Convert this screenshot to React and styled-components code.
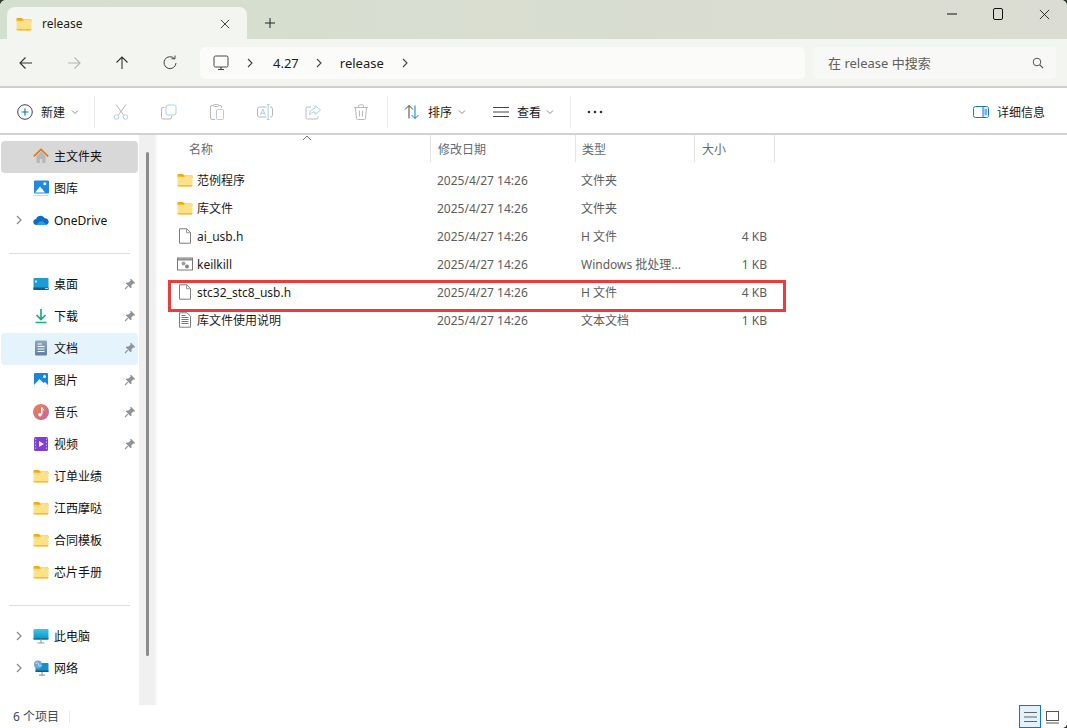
import React from 'react';
import styled, { createGlobalStyle } from 'styled-components';

const Global = createGlobalStyle`
  html, body { margin: 0; padding: 0; background: #2f3a2a; }
  body { font-family: "Noto Sans", "Noto Sans CJK SC", sans-serif; font-size: 12px; color: #1a1a1a; }
  * { box-sizing: border-box; }
`;

const Window = styled.div`
  width: 1067px; height: 728px; display: flex; flex-direction: column; overflow: hidden; background: #fff;
  border-radius: 6px 6px 5px 0;
`;
const TitleBar = styled.div`
  height: 39px; flex: none; display: flex; align-items: flex-end; padding-left: 7px;
  background: linear-gradient(90deg, #d5dfd0, #d9ddd1 60%, #dbdcd3);
`;
const Tab = styled.div`
  width: 240px; height: 32px; background: #f3f5f0; border-radius: 8px 8px 0 0;
  display: flex; align-items: center; padding: 1px 17px 0 9px; color: #1c1c1c;
`;
const TabLabel = styled.span`
  flex: 1; margin-left: 10px; font-size: 12px; line-height: 16px;
`;
const NewTab = styled.div`
  width: 46px; height: 32px; display: flex; align-items: center; justify-content: center;
`;
const WinControls = styled.div`
  margin-left: auto; height: 39px; display: flex; align-self: flex-start;
`;
const WinBtn = styled.div`
  width: 46px; height: 28px; display: flex; align-items: center; justify-content: center;
`;
const NavBar = styled.div`
  height: 49px; flex: none; background: #f3f5f0; border-bottom: 2px solid #cfd1c9;
  display: flex; align-items: center; padding: 0 11px 0 2px;
`;
const NavBtn = styled.div`
  width: 48px; height: 32px; display: flex; align-items: center; justify-content: center;
`;
const Address = styled.div`
  width: 605px; height: 32px; margin-left: 6px; background: #fbfcfa; border-radius: 5px;
  display: flex; align-items: center; padding-left: 13px;
`;
const Crumb = styled.span`
  display: flex; align-items: center; font-size: 13px; margin: 0 ${p => p.$after}px 0 ${p => p.$before}px; color: #1c1c1c;
`;
const Search = styled.div`
  width: 243px; height: 32px; margin-left: 8px; background: #f8f9f6; border-radius: 5px;
  display: flex; align-items: center; justify-content: space-between; padding: 0 12px 0 15px; color: #5f5f5f; font-size: 13px;
`;
const CmdBar = styled.div`
  height: 47px; flex: none; background: #fff; border-bottom: 2px solid #d3d3cd;
  display: flex; align-items: center; padding-top: 2px;
`;
const CmdGroup = styled.div`
  width: ${p => p.$w}px; height: 32px; display: flex; align-items: center; padding-left: ${p => p.$pl || 0}px; flex: none;
`;
const CmdIcon = styled.div`
  width: 48px; height: 32px; display: flex; align-items: center; justify-content: center; flex: none;
`;
const CmdSep = styled.div`
  width: 1px; height: 32px; background: #e9e9e9; flex: none;
`;
const CmdLabel = styled.span`
  margin-left: 8px; font-size: 12px; color: #1a1a1a;
`;
const Caret = styled.span`
  margin-left: ${p => p.$ml || 6}px; display: flex;
`;
const Details = styled.div`
  margin-left: auto; padding-right: 22px; display: flex; align-items: center;
`;
const Body = styled.div`
  flex: 1; min-height: 0; display: flex;
`;
const Side = styled.nav`
  width: 139px; flex: none; padding: 6px 1px 0 1px;
`;
const SideItem = styled.div`
  height: 32px; border-radius: 4px; display: flex; align-items: center; padding-bottom: 2px;
  background: ${p => p.$bg || 'transparent'}; color: #111; font-size: 12px;
`;
const Chevron = styled.span`
  width: 32px; flex: none; display: flex; justify-content: center; padding-left: 3px;
`;
const SideIcon = styled.span`
  width: 16px; height: 16px; flex: none; display: flex;
`;
const SideText = styled.span`
  margin-left: 5px; flex: 1;
`;
const Pin = styled.span`
  width: 14px; flex: none; display: flex;
`;
const SideSep = styled.div`
  height: 32px; display: flex; align-items: center; padding: 0 8px;
  &::after { content: ""; display: block; width: 121px; height: 1px; background: #dcdcdc; }
`;
const Track = styled.div`
  width: 18px; flex: none; background: #f0f0f0; padding: 17px 0 0 7px; border-right: 2px solid #f6f6f6;
`;
const Thumb = styled.div`
  width: 3px; height: 504px; background: #8b8b8b; border-radius: 2px;
`;
const Main = styled.main`
  flex: 1; min-width: 0; position: relative;
`;
const HeaderRow = styled.div`
  display: grid; grid-template-columns: 274px 145px 119px 80px; height: 27px; position: relative; color: #5f6b78;
`;
const HeadCell = styled.div`
  padding-left: ${p => p.$pl}px; display: flex; align-items: center; border-right: 1px solid #e5e5e5; font-size: 12px;
`;
const SortCaret = styled.span`
  position: absolute; left: 145px; top: 0; display: flex;
`;
const Rows = styled.div`
  padding-top: 4px; position: relative;
`;
const Row = styled.div`
  display: grid; grid-template-columns: 273px 145px 119px 80px; height: 28px; align-items: center; color: #5d5d5d; font-size: 12px;
`;
const NameCell = styled.div`
  display: flex; align-items: center; padding-left: 20px; color: #1c1c1c;
`;
const RowIcon = styled.span`
  width: 16px; height: 16px; display: flex; flex: none;
`;
const RowName = styled.span`
  margin-left: 4px;
`;
const Cell = styled.div`
  padding-left: ${p => p.$pl}px;
`;
const SizeCell = styled.div`
  text-align: right; padding-right: 7px;
`;
const RedBox = styled.div`
  position: absolute; left: 11px; top: 118px; width: 618px; height: 32px; border: 3px solid #ef3a3a; pointer-events: none;
`;
const Status = styled.footer`
  height: 23px; flex: none; display: flex; align-items: center; padding-left: 13px; color: #3a4a5c; font-size: 12px; background: #fff;
`;
const StatusText = styled.span`
  padding-bottom: 2px;
`;
const StatusSep = styled.div`
  width: 1px; height: 12px; background: #e8e8e8; margin-left: 10px;
`;
const ViewBtns = styled.div`
  margin-left: auto; display: flex; align-items: center; padding-right: 4px;
`;
const ViewBtn = styled.div`
  width: 22px; height: 23px; display: flex; align-items: center; justify-content: center;
  ${p => p.$on ? 'background:#e3f2fa;border:1px solid #0a78d0;' : ''}
`;

const Folder = () => (
  <svg width="16" height="16" viewBox="0 0 16 16">
    <path d="M0.500 3.200c0-.7.5-1.200 1.200-1.200h3.600c.4 0 .7.100 1 .4l1 1H14.300c.7 0 1.200.5 1.200 1.200v1H.5z" fill="#f0ac0c" />
    <path d="M.5 4.800h6.600L8.500 4h5.800c.7 0 1.200.5 1.200 1.200v8c0 .7-.5 1.200-1.200 1.200H1.700c-.7 0-1.200-.5-1.200-1.200z" fill="#fde08a" />
    <path d="M.5 13.200h15v.1c0 .7-.5 1.200-1.200 1.200H1.700c-.7 0-1.200-.5-1.200-1.200z" fill="#f2b51f" />
  </svg>
);
const FileIcon = () => (
  <svg width="16" height="16" viewBox="0 0 16 16">
    <path d="M2.500.8h7.200l3.800 3.800v10.600h-11z" fill="#fff" stroke="#7d7d7d" />
    <path d="M9.500 1v3.700h3.800" fill="none" stroke="#9a9a9a" />
  </svg>
);
const BatIcon = () => (
  <svg width="16" height="16" viewBox="0 0 16 16">
    <rect x=".5" y="2" width="15" height="12" fill="#fff" stroke="#7a7a7a" />
    <rect x="1" y="2.500" width="14" height="2" fill="#8d8d8d" />
    <circle cx="6.500" cy="7.500" r="2" fill="#9aa0a6" />
    <circle cx="10" cy="10.500" r="2" fill="#7f868c" />
  </svg>
);
const TxtIcon = () => (
  <svg width="16" height="16" viewBox="0 0 16 16">
    <path d="M2.500.8h7.500l3.500 3.500v10.900h-11z" fill="#fff" stroke="#7d7d7d" />
    <path d="M4.500 5.500h7M4.500 7.500h7M4.500 9.500h7M4.500 11.500h7M4.500 3.500h4" stroke="#777" />
  </svg>
);
const Home = () => (
  <svg width="16" height="16" viewBox="0 0 16 16">
    <path d="M3.500 8v7h3.400v-4h2.200v4h3.400V8L8 3.500z" fill="#b7b7b7" />
    <path d="M.8 8.400 8 1.400l7.200 7" fill="none" stroke="#e2761a" strokeWidth="1.700" />
  </svg>
);
const Gallery = () => (
  <svg width="16" height="16" viewBox="0 0 16 16">
    <rect x="1" y="0.500" width="15" height="13" rx="1" fill="#1f88e0" />
    <circle cx="11.800" cy="3.800" r="1.500" fill="#fff" />
    <path d="M2 12.500 7 6.500l5 6z" fill="#fff" />
    <path d="M0 9v6h15v.8H1.400C.6 15.800 0 15.200 0 14.400z" fill="#a7cdea" />
  </svg>
);
const Cloud = () => (
  <svg width="16" height="16" viewBox="0 0 16 16">
    <path d="M3.600 13C1.700 13 .3 11.700.3 10c0-1.600 1.200-2.900 2.800-3C3.800 5 5.600 3.800 7.600 3.800c1.800 0 3.300 1 4 2.500 2.200-.2 4.100 1.500 4.100 3.500 0 1.800-1.500 3.200-3.400 3.200z" fill="#0f6cc4" />
    <path d="M3.600 13C5 10 7.500 8.500 10 9.500l3.500 3.500z" fill="#2b9ae8" />
  </svg>
);
const Desktop = () => (
  <svg width="16" height="16" viewBox="0 0 16 16">
    <rect x=".5" y="2" width="15" height="12" rx="1" fill="#1d9cd3" />
    <rect x=".5" y="11.500" width="15" height="2.500" fill="#0b5f96" />
    <rect x="2" y="4.500" width="2" height="2" fill="#c8edf9" />
    <rect x="12" y="12" width="3" height="1" fill="#9fd7ef" />
  </svg>
);
const Download = () => (
  <svg width="16" height="16" viewBox="0 0 16 16">
    <path d="M8 1v10M3.500 7 8 11.500 12.500 7" fill="none" stroke="#18a57c" strokeWidth="1.600" />
    <path d="M2.500 14.500h11" stroke="#20b58a" strokeWidth="1.600" />
  </svg>
);
const Doc = () => (
  <svg width="16" height="16" viewBox="0 0 16 16">
    <defs><linearGradient id="dg" x1="0" y1="0" x2="0" y2="1"><stop offset="0" stopColor="#8ea6c3" /><stop offset="1" stopColor="#647f9f" /></linearGradient></defs>
    <rect x="2" y="0.500" width="12" height="15" rx="1" fill="url(#dg)" />
    <path d="M4.500 4h4.500M4.500 6.500h7M4.500 9h7M4.500 11.500h7" stroke="#fff" />
  </svg>
);
const Pic = () => (
  <svg width="16" height="16" viewBox="0 0 16 16">
    <rect x="1" y="1" width="14" height="14" rx="1" fill="#1787dc" />
    <circle cx="11.500" cy="4.500" r="1.500" fill="#fff" />
    <path d="M1 13 6.500 7l4 4 1.500-1 3 3v1a1 1 0 0 1-1 1H2a1 1 0 0 1-1-1z" fill="#fff" />
  </svg>
);
const Music = () => (
  <svg width="16" height="16" viewBox="0 0 16 16">
    <defs><linearGradient id="mg" x1="0" y1="0" x2="1" y2="1"><stop offset="0" stopColor="#e8894a" /><stop offset="1" stopColor="#c660a8" /></linearGradient></defs>
    <circle cx="8" cy="8" r="8" fill="url(#mg)" />
    <path d="M8.800 3.500v6.800" stroke="#fff" strokeWidth="1.400" />
    <path d="M8.800 3.500c.5 1.500 2 1.500 2.200 3" stroke="#fff" fill="none" />
    <circle cx="7" cy="10.700" r="1.800" fill="#fff" />
  </svg>
);
const Video = () => (
  <svg width="16" height="16" viewBox="0 0 16 16">
    <rect x="1" y="1" width="14" height="14" rx="1.500" fill="#7c3fd0" />
    <path d="M6 5v6l5-3z" fill="#f2e9ff" />
    <path d="M2.500 2.500v11M13.500 2.500v11" stroke="#c9a8f2" strokeWidth="1.200" strokeDasharray="1.500 1.500" />
  </svg>
);
const PC = () => (
  <svg width="16" height="16" viewBox="0 0 16 16">
    <defs><linearGradient id="pg" x1="0" y1="0" x2="0" y2="1"><stop offset="0" stopColor="#3cc9e0" /><stop offset="1" stopColor="#0f8ec6" /></linearGradient></defs>
    <rect x=".5" y="1" width="15" height="10.500" rx="1" fill="url(#pg)" />
    <rect x=".5" y="10.500" width="15" height="1" fill="#0b5d86" />
    <path d="M8 11.500V15M4.500 15h7" stroke="#8aa0ad" strokeWidth="1.200" />
  </svg>
);
const Net = () => (
  <svg width="16" height="16" viewBox="0 0 16 16">
    <rect x="2.500" y="3" width="13" height="9" rx="1" fill="#1592c4" />
    <rect x="2.500" y="10.500" width="13" height="1.500" fill="#0b5d86" />
    <path d="M9 12v3M6 15.200h6" stroke="#8aa0ad" strokeWidth="1.200" />
    <circle cx="5" cy="4.500" r="4" fill="#6ea8d8" />
    <path d="M2.500 3.500c2-1 3-1 3 1s2 1 3 1" stroke="#d5e8f6" fill="none" />
  </svg>
);
const PinIcon = () => (
  <svg width="12" height="12" viewBox="0 0 12 12">
    <path d="M7 .8 11.200 5 10.200 5.800 9.300 5.400 7.400 7.600 7.600 9.600 6.600 10.200 1.800 5.400 2.600 4.400 4.500 4.600 6.600 2.700 6.200 1.600z" fill="#8e9499" />
    <path d="M3.800 8.200 1 11" stroke="#8e9499" strokeWidth="1.200" />
  </svg>
);
const ChevR = ({ c = '#8a8a8a', s = 1.300 }) => (
  <svg width="8" height="10" viewBox="0 0 8 10"><path d="M2 1l4 4-4 4" fill="none" stroke={c} strokeWidth={s} /></svg>
);
const ChevD = () => (
  <svg width="8" height="6" viewBox="0 0 8 6"><path d="M1 1.500 4 4.500 7 1.500" fill="none" stroke="#8a8a8a" strokeWidth="1" /></svg>
);
const Arrow = ({ d, c = '#333' }) => {
  const rot = { left: 0, right: 180, up: 90 }[d];
  return (
    <svg width="16" height="16" viewBox="0 0 16 16" style={{ transform: `rotate(${rot}deg)` }}>
      <path d="M14 8H2.200M7.500 2.500 2 8l5.500 5.500" fill="none" stroke={c} strokeWidth="1.100" />
    </svg>
  );
};
const Refresh = () => (
  <svg width="16" height="16" viewBox="0 0 16 16">
    <path d="M12.500 3.700A6 6 0 1 0 14 8" fill="none" stroke="#444" strokeWidth="1" />
    <path d="M9.500 3.800h3.500V.5" fill="none" stroke="#444" strokeWidth="1" />
  </svg>
);
const Monitor = () => (
  <svg width="16" height="16" viewBox="0 0 16 16">
    <rect x="1" y="1" width="14" height="11" rx="1.500" fill="none" stroke="#444" strokeWidth="1" />
    <path d="M8 12v2.500M5 14.500h6" stroke="#444" strokeWidth="1.200" />
  </svg>
);
const SearchIcon = () => (
  <svg width="12" height="12" viewBox="0 0 12 12">
    <circle cx="5" cy="5" r="3.800" fill="none" stroke="#555" strokeWidth="1" />
    <path d="M7.800 7.800 11 11" stroke="#555" strokeWidth="1.100" />
  </svg>
);
const B = '#a9cff0', G = '#b9b9b9';
const Plus = () => (
  <svg width="16" height="16" viewBox="0 0 16 16">
    <circle cx="8" cy="8" r="7.300" fill="none" stroke="#444" strokeWidth="1" />
    <path d="M8 4.500v7M4.500 8h7" stroke="#0a78d4" strokeWidth="1.200" />
  </svg>
);
const Cut = () => (
  <svg width="16" height="16" viewBox="0 0 16 16">
    <path d="M3 .5 10.500 11M13 .5 5.500 11" fill="none" stroke={G} />
    <circle cx="3.500" cy="13" r="2.300" fill="none" stroke={B} />
    <circle cx="12.500" cy="13" r="2.300" fill="none" stroke={B} />
  </svg>
);
const Copy = () => (
  <svg width="16" height="16" viewBox="0 0 16 16">
    <path d="M3.500 3.500H2A1.500 1.500 0 0 0 .5 5v8.500A1.500 1.500 0 0 0 2 15h7a1.500 1.500 0 0 0 1.500-1.500V12" fill="none" stroke={G} />
    <rect x="5" y="1" width="10" height="10" rx="2" fill="none" stroke={B} />
  </svg>
);
const Paste = () => (
  <svg width="16" height="16" viewBox="0 0 16 16">
    <path d="M6 15.500H3A1.500 1.500 0 0 1 1.500 14V3A1.500 1.500 0 0 1 3 1.500h8A1.500 1.500 0 0 1 12.500 3v1" fill="none" stroke={G} />
    <rect x="4.500" y=".5" width="5" height="2" rx=".8" fill="#fff" stroke={G} />
    <rect x="7.500" y="5.500" width="7" height="10" rx="1" fill="none" stroke={B} />
  </svg>
);
const Rename = () => (
  <svg width="16" height="16" viewBox="0 0 16 16">
    <path d="M9.500 3H2.500A2 2 0 0 0 .5 5v6a2 2 0 0 0 2 2h7M13 3h.5a2 2 0 0 1 2 2v6a2 2 0 0 1-2 2H13" fill="none" stroke={G} />
    <path d="M3.300 11 5.800 5l2.500 6M4.200 9.200h3.200" stroke={B} fill="none" />
    <path d="M11.200.8v14.400M9.800.5h2.800M9.800 15.500h2.800" stroke={B} fill="none" />
  </svg>
);
const Share = () => (
  <svg width="16" height="16" viewBox="0 0 16 16">
    <path d="M6 3H2.500A1.500 1.500 0 0 0 1 4.500v9A1.500 1.500 0 0 0 2.500 15h9a1.500 1.500 0 0 0 1.500-1.500V12" fill="none" stroke={G} />
    <path d="M10 1.500 15.500 6 10 10.500V8C7.500 8 5.500 9 4.500 11c0-4 2.500-6.500 5.500-6.500z" fill="none" stroke={B} />
  </svg>
);
const Trash = () => (
  <svg width="16" height="16" viewBox="0 0 16 16">
    <path d="M1 3.500h14M5.500 3.500V2A1.200 1.200 0 0 1 6.700.8h2.600A1.200 1.200 0 0 1 10.500 2v1.500M2.500 3.500l1 11a1 1 0 0 0 1 1h7a1 1 0 0 0 1-1l1-11M6.500 6.500v6M9.500 6.500v6" fill="none" stroke={G} />
  </svg>
);
const Sort = () => (
  <svg width="16" height="16" viewBox="0 0 16 16">
    <path d="M5 14.500V1.500M1 5.500l4-4 4 4" fill="none" stroke="#444" />
    <path d="M11 1.500v13M7.500 11l3.500 3.500 3.500-3.500" fill="none" stroke="#0a78d4" />
  </svg>
);
const ListLines = ({ w = 16, c = '#444' }) => (
  <svg width={w} height="16" viewBox="0 0 16 16" preserveAspectRatio="none"><path d="M0 3.500h16M0 8h16M0 12.500h16" stroke={c} strokeWidth="1" /></svg>
);
const More = () => (
  <svg width="16" height="16" viewBox="0 0 16 16">
    <circle cx="2" cy="8" r="1.300" fill="#333" /><circle cx="8" cy="8" r="1.300" fill="#333" /><circle cx="14" cy="8" r="1.300" fill="#333" />
  </svg>
);
const Pane = () => (
  <svg width="16" height="16" viewBox="0 0 16 16">
    <rect x=".5" y="2.500" width="15" height="11" rx="2" fill="none" stroke="#1a78c8" />
    <rect x="10" y="3" width="5" height="10" fill="#d7eafa" />
    <path d="M10 2.500v11M11.500 6h2.500M11.500 8h2.500M11.500 10h2.500" stroke="#1a78c8" />
  </svg>
);
const X = ({ s = 12 }) => (
  <svg width={s} height={s} viewBox="0 0 12 12"><path d="M1 1l10 10M11 1 1 11" stroke="#222" strokeWidth="1" /></svg>
);

const sideTop = [
  { n: '主文件夹', i: <Home />, bg: '#d8d8d8' },
  { n: '图库', i: <Gallery /> },
  { n: 'OneDrive', i: <Cloud />, chev: true },
];
const sideMid = [
  { n: '桌面', i: <Desktop />, pin: true },
  { n: '下载', i: <Download />, pin: true },
  { n: '文档', i: <Doc />, pin: true, bg: '#e5f3fd' },
  { n: '图片', i: <Pic />, pin: true },
  { n: '音乐', i: <Music />, pin: true },
  { n: '视频', i: <Video />, pin: true },
  { n: '订单业绩', i: <Folder /> },
  { n: '江西摩哒', i: <Folder /> },
  { n: '合同模板', i: <Folder /> },
  { n: '芯片手册', i: <Folder /> },
];
const sideBot = [
  { n: '此电脑', i: <PC />, chev: true },
  { n: '网络', i: <Net />, chev: true },
];
const files = [
  { n: '范例程序', i: <Folder />, t: '文件夹', s: '' },
  { n: '库文件', i: <Folder />, t: '文件夹', s: '' },
  { n: 'ai_usb.h', i: <FileIcon />, t: 'H 文件', s: '4 KB' },
  { n: 'keilkill', i: <BatIcon />, t: 'Windows 批处理...', s: '1 KB' },
  { n: 'stc32_stc8_usb.h', i: <FileIcon />, t: 'H 文件', s: '4 KB' },
  { n: '库文件使用说明', i: <TxtIcon />, t: '文本文档', s: '1 KB' },
];

const SideEntry = ({ it }) => (
  <SideItem $bg={it.bg}>
    <Chevron>{it.chev && <ChevR />}</Chevron>
    <SideIcon>{it.i}</SideIcon>
    <SideText>{it.n}</SideText>
    {it.pin && <Pin><PinIcon /></Pin>}
  </SideItem>
);

export default function App() {
  return (
    <Window>
      <Global />
      <TitleBar>
        <Tab>
          <Folder />
          <TabLabel>release</TabLabel>
          <X s={10} />
        </Tab>
        <NewTab>
          <svg width="10" height="10" viewBox="0 0 10 10"><path d="M5 0v10M0 5h10" stroke="#222" strokeWidth="1" /></svg>
        </NewTab>
        <WinControls>
          <WinBtn><svg width="10" height="2" viewBox="0 0 10 2"><path d="M0 1h10" stroke="#111" /></svg></WinBtn>
          <WinBtn><svg width="10" height="12" viewBox="0 0 10 12"><rect x=".5" y=".5" width="9" height="11" rx="1.500" fill="none" stroke="#111" /></svg></WinBtn>
          <WinBtn><X s={11} /></WinBtn>
        </WinControls>
      </TitleBar>
      <NavBar>
        <NavBtn><Arrow d="left" /></NavBtn>
        <NavBtn><Arrow d="right" c="#b4b6b2" /></NavBtn>
        <NavBtn><Arrow d="up" /></NavBtn>
        <NavBtn><Refresh /></NavBtn>
        <Address>
          <Monitor />
          <Crumb $before={17} $after={19}><ChevR c="#444" s={1.1} /></Crumb>
          <Crumb $before={0} $after={16}>4.27</Crumb>
          <Crumb $before={0} $after={17}><ChevR c="#444" s={1.1} /></Crumb>
          <Crumb $before={0} $after={17}>release</Crumb>
          <Crumb $before={0} $after={0}><ChevR c="#444" s={1.1} /></Crumb>
        </Address>
        <Search>
          <span>在 release 中搜索</span>
          <SearchIcon />
        </Search>
      </NavBar>
      <CmdBar>
        <CmdGroup $w={94} $pl={17}>
          <Plus />
          <CmdLabel>新建</CmdLabel>
          <Caret><ChevD /></Caret>
        </CmdGroup>
        <CmdSep />
        <CmdGroup $w={292} $pl={2}>
          <CmdIcon><Cut /></CmdIcon>
          <CmdIcon><Copy /></CmdIcon>
          <CmdIcon><Paste /></CmdIcon>
          <CmdIcon><Rename /></CmdIcon>
          <CmdIcon><Share /></CmdIcon>
          <CmdIcon><Trash /></CmdIcon>
        </CmdGroup>
        <CmdSep />
        <CmdGroup $w={89} $pl={16}>
          <Sort />
          <CmdLabel>排序</CmdLabel>
          <Caret><ChevD /></Caret>
        </CmdGroup>
        <CmdGroup $w={93} $pl={16}>
          <ListLines />
          <CmdLabel>查看</CmdLabel>
          <Caret $ml={5}><ChevD /></Caret>
        </CmdGroup>
        <CmdSep />
        <CmdGroup $w={60} $pl={16}><More /></CmdGroup>
        <Details>
          <Pane />
          <CmdLabel>详细信息</CmdLabel>
        </Details>
      </CmdBar>
      <Body>
        <Side>
          {sideTop.map(it => <SideEntry key={it.n} it={it} />)}
          <SideSep />
          {sideMid.map(it => <SideEntry key={it.n} it={it} />)}
          <SideSep />
          {sideBot.map(it => <SideEntry key={it.n} it={it} />)}
        </Side>
        <Track><Thumb /></Track>
        <Main>
          <HeaderRow>
            <HeadCell $pl={32}>名称</HeadCell>
            <HeadCell $pl={7}>修改日期</HeadCell>
            <HeadCell $pl={6}>类型</HeadCell>
            <HeadCell $pl={7}>大小</HeadCell>
            <SortCaret>
              <svg width="10" height="6" viewBox="0 0 10 6"><path d="M1 5l4-4 4 4" fill="none" stroke="#777" /></svg>
            </SortCaret>
          </HeaderRow>
          <Rows>
            {files.map(f => (
              <Row key={f.n}>
                <NameCell>
                  <RowIcon>{f.i}</RowIcon>
                  <RowName>{f.n}</RowName>
                </NameCell>
                <Cell $pl={7}>2025/4/27 14:26</Cell>
                <Cell $pl={6}>{f.t}</Cell>
                <SizeCell>{f.s}</SizeCell>
              </Row>
            ))}
            <RedBox />
          </Rows>
        </Main>
      </Body>
      <Status>
        <StatusText>6 个项目</StatusText>
        <StatusSep />
        <ViewBtns>
          <ViewBtn $on><ListLines w={13} c="#555" /></ViewBtn>
          <ViewBtn>
            <svg width="13" height="14" viewBox="0 0 13 14"><rect x=".5" y="1.500" width="12" height="9" fill="none" stroke="#555" /><path d="M0 13h13" stroke="#555" /></svg>
          </ViewBtn>
        </ViewBtns>
      </Status>
    </Window>
  );
}
